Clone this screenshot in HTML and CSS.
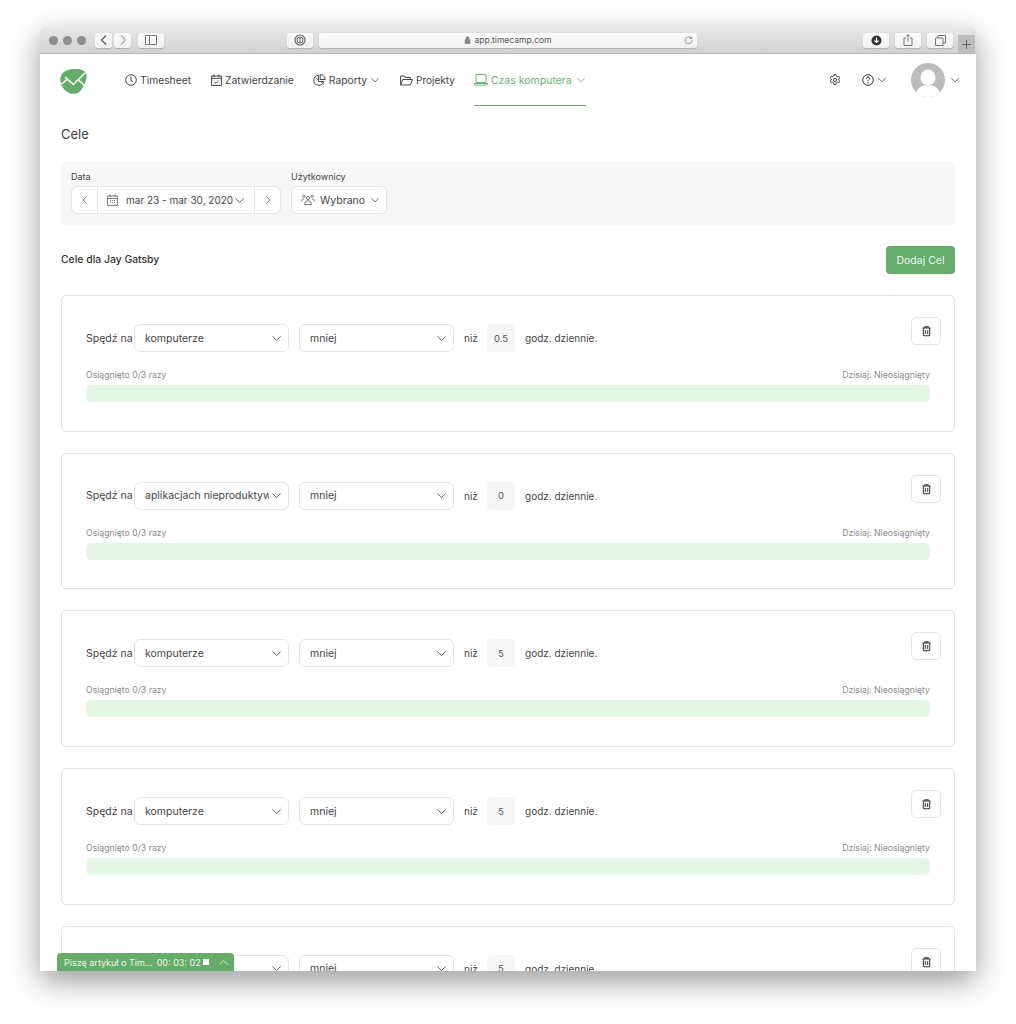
FILE: index.html
```html
<!DOCTYPE html>
<html lang="pl">
<head>
<meta charset="utf-8">
<title>Cele - TimeCamp</title>
<link rel="stylesheet" href="styles.css">
</head>
<body>
<svg class="defs" width="0" height="0" aria-hidden="true">
  <symbol id="chev" viewBox="0 0 12 12"><path d="M1.5 3.8 6 8.2l4.500-4.400" fill="none" stroke="currentColor" stroke-width="1"/></symbol>
  <symbol id="trash" viewBox="0 0 12 12"><path d="M1.500 2.800h9M4.200 2.600V1.300h3.600v1.300M2.500 2.800v7.400q0 .9.900.9h5.200q.9 0 .9-.9V2.800M4.700 4.800v4.400M7.300 4.800v4.400" fill="none" stroke="currentColor" stroke-width="1.100"/></symbol>
</svg>
<div class="window">
  <header class="toolbar">
    <div class="lights"><i></i><i></i><i></i></div>
    <div class="tb-group">
      <span class="tb-btn tb-nav"><svg width="10" height="12" viewBox="0 0 10 12"><path d="M7 1.500 2.500 6 7 10.500" fill="none" stroke="#555" stroke-width="1.200"/></svg></span>
      <span class="tb-btn tb-nav"><svg width="10" height="12" viewBox="0 0 10 12"><path d="M3 1.500 7.500 6 3 10.500" fill="none" stroke="#aaa" stroke-width="1.200"/></svg></span>
    </div>
    <span class="tb-btn tb-side"><svg width="12" height="10" viewBox="0 0 12 10"><path d="M.5.500h11v9H.500zM4.500.500v9" fill="none" stroke="#777"/></svg></span>
    <span class="tb-btn tb-pw"><svg width="12" height="12" viewBox="0 0 12 12"><circle cx="6" cy="6" r="5" fill="none" stroke="#666" stroke-width="1.200"/><circle cx="6" cy="6" r="3" fill="none" stroke="#666"/><path d="M6 3.500v5" stroke="#666"/></svg></span>
    <div class="address">
      <svg width="7" height="8" viewBox="0 0 7 8"><path d="M1 3.500h5V7.500H1zM2 3.500V2q0-1.500 1.500-1.500T5 2v1.500" fill="#888" stroke="#888" stroke-width=".6"/></svg>
      <span>app.timecamp.com</span>
      <svg class="reload" width="9" height="9" viewBox="0 0 9 9"><path d="M7.500 2.500A3.500 3.500 0 1 0 8 4.500M5.500 2.500h2.200V.500" fill="none" stroke="#777" stroke-width=".8"/></svg>
    </div>
    <span class="tb-btn tb-right"><svg width="11" height="11" viewBox="0 0 11 11"><circle cx="5.500" cy="5.500" r="5" fill="#333"/><path d="M5.500 2.500v5M3.500 5.500l2 2 2-2" fill="none" stroke="#fff" stroke-width="1.100"/></svg></span>
    <span class="tb-btn tb-right"><svg width="10" height="12" viewBox="0 0 10 12"><path d="M3 4H1v7.500h8V4H7M5 7.500V.8M3.300 2.400 5 .7l1.700 1.700" fill="none" stroke="#666" stroke-width=".9"/></svg></span>
    <span class="tb-btn tb-right"><svg width="11" height="11" viewBox="0 0 11 11"><path d="M.5 3h7.500v7.500H.500zM3 3V.5h7.500V8H8" fill="none" stroke="#666" stroke-width=".9"/></svg></span>
    <span class="tb-plus"><svg width="9" height="9" viewBox="0 0 9 9"><path d="M4.500 0v9M0 4.500h9" stroke="#666"/></svg></span>
  </header>

  <div class="page">
    <nav class="topnav">
      <svg class="logo" width="27" height="25" viewBox="0 0 27 25">
        <path d="M4 3C8.500 0 14 -.5 19 0c2.500 1 5.500 2 7 3.500 1 3 .8 6-.5 9.500-1.500 4-3.500 7.500-6 9.800-2.500 2.200-7 2.700-10.500 1.200C5.500 22.500 1.500 18 .4 12.500-.2 8.500 1 5 4 3z" fill="#63ad69"/>
        <path d="M5 8 13.300 15.500 25.500 3.500M1.500 15 7.500 10M18.500 11 25 17" fill="none" stroke="#fff" stroke-width="1.600"/>
      </svg>
      <a class="nav-item nav-time"><svg width="12" height="12" viewBox="0 0 12 12"><circle cx="6" cy="6" r="5.300" fill="none" stroke="currentColor"/><path d="M6 2.800V6.300l2 1.400" fill="none" stroke="currentColor"/></svg>Timesheet</a>
      <a class="nav-item nav-appr"><svg width="11" height="12" viewBox="0 0 11 12"><path d="M.6 2h9.800v9.400H.600zM.6 4.300h9.800M3 .4v2.600M8 .4v2.600M3.400 7.800l1.600 1.500 2.800-2.800" fill="none" stroke="currentColor"/></svg>Zatwierdzanie</a>
      <a class="nav-item nav-rep"><svg width="13" height="12" viewBox="0 0 13 12"><path d="M5.500 1.300A5 5 0 1 0 10.700 7.500H5.500zM7.200.5a5 5 0 0 1 5 5H7.200z" fill="none" stroke="currentColor"/><path d="M2.500 3.500 5 6M8 7.500l2.500 3" stroke="currentColor" stroke-width=".8"/></svg>Raporty<svg class="chev" width="10" height="10"><use href="#chev"/></svg></a>
      <a class="nav-item nav-proj"><svg width="13" height="11" viewBox="0 0 13 11"><path d="M.6 10V1h3.800l1 1.500h5v2M.6 10h9.800l2-5.500H2.800z" fill="none" stroke="currentColor"/></svg>Projekty</a>
      <a class="nav-item nav-comp"><svg width="14" height="12" viewBox="0 0 14 12"><path d="M2 .6h10v8H2zM.4 9.500h13.200v.7q0 .9-.9.9H1.300q-.9 0-.9-.9z" fill="none" stroke="currentColor"/></svg>Czas komputera<svg class="chev" width="10" height="10"><use href="#chev"/></svg></a>
      <div class="nav-right">
        <svg class="gear" width="12" height="12" viewBox="0 0 12 12"><path d="M5 .6h2l.3 1.500 1.100.6 1.400-.5 1 1.700-1.100 1 0 1.200 1.100 1-1 1.700-1.400-.5-1.100.6-.3 1.500H5l-.3-1.500-1.100-.6-1.400.5-1-1.700 1.100-1 0-1.200-1.100-1 1-1.700 1.400.5 1.100-.6z" fill="none" stroke="#333" stroke-width=".9"/><circle cx="6" cy="6" r="1.700" fill="none" stroke="#333" stroke-width=".9"/></svg>
        <span class="help"><svg width="12" height="12" viewBox="0 0 12 12"><circle cx="6" cy="6" r="5.300" fill="none" stroke="#333"/><path d="M4.300 4.700Q4.400 3 6 3t1.700 1.500C7.700 5.800 6 5.800 6 7.300" fill="none" stroke="#333"/><circle cx="6" cy="9" r=".7" fill="#333"/></svg><svg class="chev" width="10" height="10"><use href="#chev"/></svg></span>
        <span class="avatar-wrap">
          <svg width="34" height="34" viewBox="0 0 34 34"><defs><clipPath id="avc"><circle cx="17" cy="17" r="17"/></clipPath></defs><circle cx="17" cy="17" r="17" fill="#bcbcbc"/><g clip-path="url(#avc)" fill="#fff"><ellipse cx="17" cy="14.500" rx="7.500" ry="8"/><path d="M4 36c0-10 6-14 13-14s13 4 13 14z"/></g></svg>
          <svg class="chev" width="10" height="10"><use href="#chev"/></svg>
        </span>
      </div>
    </nav>

    <main class="content">
      <h1 class="page-title">Cele</h1>

      <section class="filters">
        <div class="field">
          <label class="field-label">Data</label>
          <div class="date-group">
            <span class="date-arrow"><svg width="10" height="10" class="flip-l" viewBox="0 0 12 12"><use href="#chev"/></svg></span>
            <span class="date-main"><svg width="11" height="12" viewBox="0 0 11 12"><path d="M.6 2h9.800v9.400H.600zM.6 4.500h9.800M3 .5V3M8 .5V3M3 6.500h1M5 6.500h1M7 6.500h1M3 8.500h1M5 8.500h1M7 8.500h1" fill="none" stroke="#555" stroke-width=".8"/></svg><span>mar 23 - mar 30, 2020</span><svg class="chev" width="11" height="11"><use href="#chev"/></svg></span>
            <span class="date-arrow"><svg width="10" height="10" class="flip-r" viewBox="0 0 12 12"><use href="#chev"/></svg></span>
          </div>
        </div>
        <div class="field">
          <label class="field-label">Użytkownicy</label>
          <div class="users-select"><svg width="14" height="12" viewBox="0 0 14 12"><g fill="none" stroke="#555" stroke-width=".8"><circle cx="7" cy="4" r="1.600"/><circle cx="2.800" cy="2.300" r="1.200"/><circle cx="11.200" cy="2.300" r="1.200"/><path d="M3.800 10.500V9Q3.800 6.800 7 6.800T10.200 9v1.500zM.5 7.500Q.5 5 2.800 5M13.500 7.500Q13.500 5 11.200 5"/></g></svg><span>Wybrano</span><svg class="chev" width="10" height="10"><use href="#chev"/></svg></div>
        </div>
      </section>

      <div class="goals-head">
        <h2 class="goals-title">Cele dla Jay Gatsby</h2>
        <button class="add-btn">Dodaj Cel</button>
      </div>

      <article class="card">
        <div class="card-top">
          <div class="goal-row">
            <span class="lbl-spend">Spędź na</span>
            <div class="select"><span>komputerze</span><svg class="chev" width="11" height="11"><use href="#chev"/></svg></div>
            <div class="select"><span>mniej</span><svg class="chev" width="11" height="11"><use href="#chev"/></svg></div>
            <span class="lbl lbl-than">niż</span><span class="num">0.5</span><span class="lbl">godz. dziennie.</span>
          </div>
          <button class="trash"><svg width="11" height="12"><use href="#trash"/></svg></button>
        </div>
        <div class="meta"><span>Osiągnięto 0/3 razy</span><span>Dzisiaj: Nieosiągnięty</span></div>
        <div class="bar"></div>
      </article>

      <article class="card">
        <div class="card-top">
          <div class="goal-row">
            <span class="lbl-spend">Spędź na</span>
            <div class="select"><span>aplikacjach nieproduktywnych</span><svg class="chev" width="11" height="11"><use href="#chev"/></svg></div>
            <div class="select"><span>mniej</span><svg class="chev" width="11" height="11"><use href="#chev"/></svg></div>
            <span class="lbl lbl-than">niż</span><span class="num">0</span><span class="lbl">godz. dziennie.</span>
          </div>
          <button class="trash"><svg width="11" height="12"><use href="#trash"/></svg></button>
        </div>
        <div class="meta"><span>Osiągnięto 0/3 razy</span><span>Dzisiaj: Nieosiągnięty</span></div>
        <div class="bar"></div>
      </article>

      <article class="card">
        <div class="card-top">
          <div class="goal-row">
            <span class="lbl-spend">Spędź na</span>
            <div class="select"><span>komputerze</span><svg class="chev" width="11" height="11"><use href="#chev"/></svg></div>
            <div class="select"><span>mniej</span><svg class="chev" width="11" height="11"><use href="#chev"/></svg></div>
            <span class="lbl lbl-than">niż</span><span class="num">5</span><span class="lbl">godz. dziennie.</span>
          </div>
          <button class="trash"><svg width="11" height="12"><use href="#trash"/></svg></button>
        </div>
        <div class="meta"><span>Osiągnięto 0/3 razy</span><span>Dzisiaj: Nieosiągnięty</span></div>
        <div class="bar"></div>
      </article>

      <article class="card">
        <div class="card-top">
          <div class="goal-row">
            <span class="lbl-spend">Spędź na</span>
            <div class="select"><span>komputerze</span><svg class="chev" width="11" height="11"><use href="#chev"/></svg></div>
            <div class="select"><span>mniej</span><svg class="chev" width="11" height="11"><use href="#chev"/></svg></div>
            <span class="lbl lbl-than">niż</span><span class="num">5</span><span class="lbl">godz. dziennie.</span>
          </div>
          <button class="trash"><svg width="11" height="12"><use href="#trash"/></svg></button>
        </div>
        <div class="meta"><span>Osiągnięto 0/3 razy</span><span>Dzisiaj: Nieosiągnięty</span></div>
        <div class="bar"></div>
      </article>

      <article class="card">
        <div class="card-top">
          <div class="goal-row">
            <span class="lbl-spend">Spędź na</span>
            <div class="select"><span>komputerze</span><svg class="chev" width="11" height="11"><use href="#chev"/></svg></div>
            <div class="select"><span>mniej</span><svg class="chev" width="11" height="11"><use href="#chev"/></svg></div>
            <span class="lbl lbl-than">niż</span><span class="num">5</span><span class="lbl">godz. dziennie.</span>
          </div>
          <button class="trash"><svg width="11" height="12"><use href="#trash"/></svg></button>
        </div>
      </article>
    </main>

    <div class="timer">
      <span class="timer-name">Piszę artykuł o Tim...</span>
      <span class="timer-time">00: 03: 02</span>
      <i class="timer-stop"></i>
      <svg class="chev timer-up" width="11" height="11"><use href="#chev"/></svg>
    </div>
  </div>
</div>
</body>
</html>
```
FILE: styles.css
```css
* { box-sizing: border-box; }
html, body { margin: 0; padding: 0; background: #fff; }
body { font-family: Inter, "Open Sans", "Liberation Sans", sans-serif; color: #3a3a3a; height: 1024px; overflow: hidden; }
.defs { position: absolute; }
svg { display: block; flex: none; }
.chev { color: #555; }

.window { margin: 27px 0 0 40px; width: 936px; height: 944px; display: flex; flex-direction: column; border-radius: 5px 5px 0 0; box-shadow: 0 10px 30px rgba(0,0,0,.4); background: #fff; }

.toolbar { height: 27px; flex: none; display: flex; align-items: center; padding: 0 0 0 9px; background: linear-gradient(#e9e9e9, #d1d1d1); border-bottom: 1px solid #b9b9b9; border-radius: 5px 5px 0 0; }
.lights { display: flex; gap: 5px; width: 46px; }
.lights i { width: 9px; height: 9px; border-radius: 50%; background: #8e8e8e; }
.tb-group { display: flex; gap: 2px; }
.tb-btn { display: flex; align-items: center; justify-content: center; height: 15px; background: linear-gradient(#fbfbfb, #f1f1f1); border-radius: 3px; box-shadow: 0 .5px 1px rgba(0,0,0,.2); }
.tb-nav { width: 17px; }
.tb-side { width: 26px; margin-left: 7px; }
.tb-pw { width: 26px; margin-left: 123px; }
.address { width: 378px; height: 15px; margin-left: 6px; display: flex; align-items: center; justify-content: center; gap: 3px; background: linear-gradient(#fbfbfb, #f1f1f1); border-radius: 3px; box-shadow: 0 .5px 1px rgba(0,0,0,.2); font-size: 8.500px; color: #555; position: relative; }
.reload { position: absolute; right: 4px; top: 3px; }
.tb-right { width: 26px; margin-right: 6px; }
.address + .tb-right { margin-left: 166px; }
.tb-plus { width: 17px; height: 18px; margin-left: -1px; align-self: flex-end; display: flex; align-items: center; justify-content: center; background: #bdbdbd; margin-right: -1px; }

.page { flex: 1; min-height: 0; position: relative; overflow: hidden; background: #fff; }

.topnav { height: 52px; display: flex; align-items: center; padding: 0 16px 0 20px; font-size: 10.300px; color: #444; position: relative; }
.logo { margin: 2px 38px 0 0; }
.nav-item { display: flex; align-items: center; gap: 3px; white-space: nowrap; }
.nav-time { margin-right: 20px; }
.nav-appr { margin-right: 19px; }
.nav-rep { margin-right: 20px; }
.nav-proj { margin-right: 19px; font-size: 10px; }
.nav-comp { color: #6bb16f; position: relative; font-size: 10.500px; }
.nav-comp .chev { color: #6bb16f; margin-left: 1px; }
.nav-comp::after { content: ""; position: absolute; left: 0; right: 0; top: 31px; border-bottom: 1.500px solid #6f9f72; }
.nav-right { margin-left: auto; display: flex; align-items: center; }
.gear { margin-right: 21px; }
.help { display: flex; align-items: center; gap: 3px; margin-right: 24px; }
.avatar-wrap { display: flex; align-items: center; gap: 5px; }

.content { padding: 0 21px; }
.page-title { margin: 20px 0 0; font-size: 13px; line-height: 16px; font-weight: 400; color: #3e3e3e; }

.filters { margin-top: 20px; height: 63px; padding: 9px 10px; display: flex; gap: 10px; background: #f7f7f7; border-radius: 5px; }
.field { display: flex; flex-direction: column; }
.field-label { font-size: 9px; line-height: 11px; margin: 0 0 4px; color: #444; }
.date-group { display: flex; height: 28px; width: 210px; background: #fff; border: 1px solid #e4e4e4; border-radius: 6px; font-size: 10px; color: #444; }
.date-arrow { width: 25px; display: flex; align-items: center; justify-content: center; flex: none; }
.flip-l { transform: rotate(90deg); color: #555; }
.flip-r { transform: rotate(-90deg); color: #555; }
.date-main { flex: 1; display: flex; align-items: center; padding-left: 9px; border-left: 1px solid #e4e4e4; border-right: 1px solid #e4e4e4; white-space: nowrap; }
.date-main > span { margin-left: 8px; }
.date-main .chev { margin-left: 1px; }
.users-select { width: 96px; height: 28px; display: flex; align-items: center; padding-left: 9px; background: #fff; border: 1px solid #e4e4e4; border-radius: 6px; font-size: 10.500px; color: #444; }
.users-select span { margin: 0 5px 0 5px; }

.goals-head { margin-top: 21px; height: 28px; display: flex; align-items: center; justify-content: space-between; }
.goals-title { margin: 0 0 2px; font-size: 10.400px; font-weight: 500; color: #333; }
.add-btn { width: 69px; height: 28px; border: 0; padding: 0; background: #66ad6b; color: #eef6ee; border-radius: 4px; font: inherit; font-size: 10.500px; }

.card { margin-top: 21px; height: 136.700px; padding: 21px 13px 0 24px; border: 1px solid #e3e3e3; border-radius: 5px; background: #fff; }
.card-top { height: 44px; display: flex; justify-content: space-between; align-items: flex-start; }
.goal-row { display: flex; align-items: center; margin-top: 7px; font-size: 10.500px; color: #444; }
.lbl-spend { width: 48px; white-space: nowrap; }
.select { width: 155px; height: 28px; margin-right: 10px; padding: 0 6px 0 10px; display: flex; align-items: center; justify-content: space-between; background: #fff; border: 1px solid #e4e4e4; border-radius: 6px; overflow: hidden; }
.select span { white-space: nowrap; overflow: hidden; flex: 1; min-width: 0; }
.select .chev { margin-left: 2px; }
.lbl { white-space: nowrap; font-size: 10px; }
.lbl-than { width: 14px; }
.num { width: 28px; height: 28px; margin: 0 10px 0 9px; display: flex; align-items: center; justify-content: center; background: #f6f6f6; border-radius: 4px; font-size: 9.500px; color: #555; }
.trash { width: 30px; height: 28px; padding: 0; display: flex; align-items: center; justify-content: center; background: #fff; border: 1px solid #e4e4e4; border-radius: 5px; color: #333; }
.meta { display: flex; justify-content: space-between; margin: 9px 11px 0 0; font-size: 8.700px; line-height: 11px; color: #8a8a8a; }
.bar { height: 17px; margin: 4px 11px 0 0; background: #e4f7e4; border-radius: 5px; }

.timer { position: absolute; left: 17px; bottom: 0; width: 177px; height: 18px; display: flex; align-items: center; padding-left: 7px; background: #66ad6b; color: #eef6ee; border-radius: 4px 4px 0 0; font-size: 9px; white-space: nowrap; }
.timer-time { margin-left: 4px; }
.timer-stop { width: 6px; height: 6px; margin-left: 2px; background: #fff; }
.timer-up { color: #dff0df; transform: rotate(180deg); margin-left: 9px; }
```
